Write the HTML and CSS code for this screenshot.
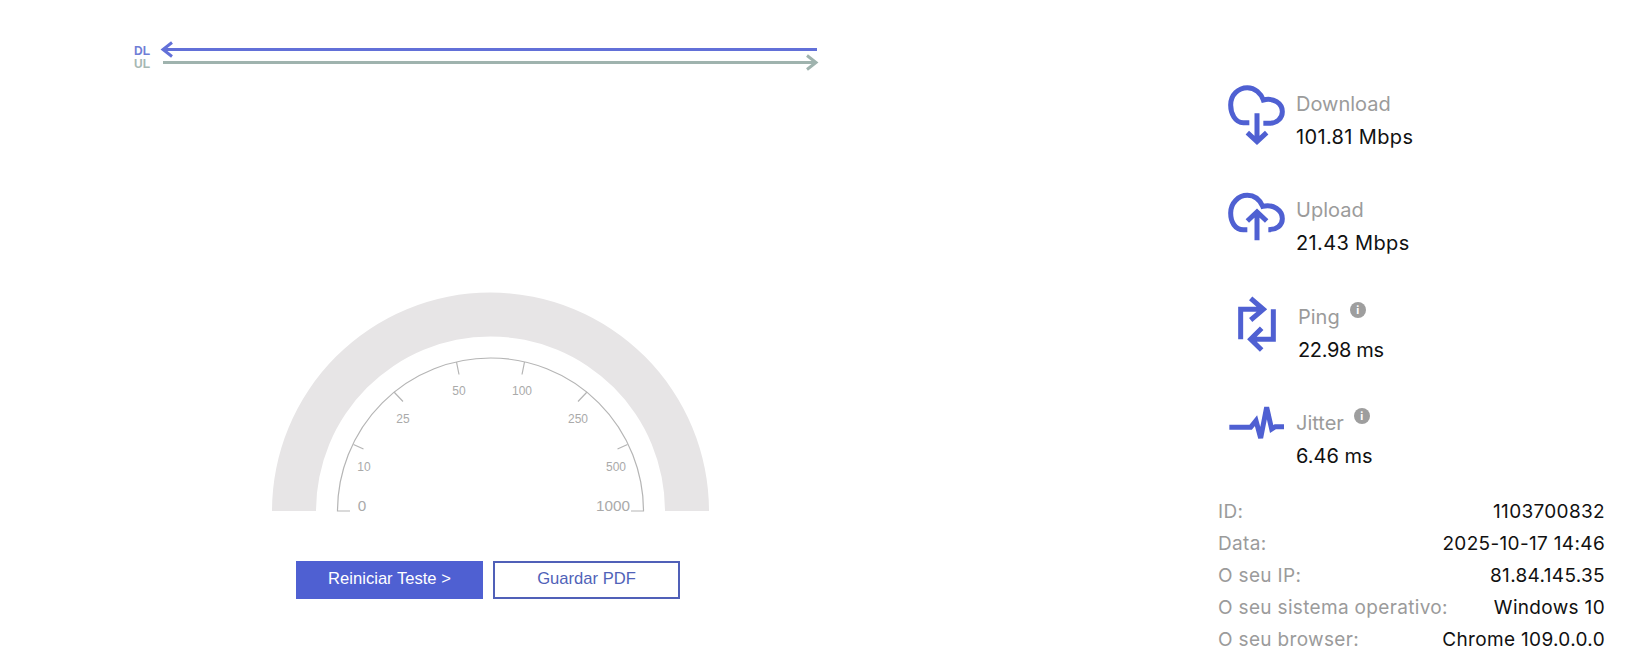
FILE: index.html
```html
<!DOCTYPE html>
<html lang="en">
<head>
  <meta charset="UTF-8">
  <title>Speed test</title>
  <link rel="stylesheet" href="styles.css">
</head>
<body>
<div class="page">
  <div class="left">
    <svg class="chart" width="840" height="80" viewBox="0 0 840 80">
      <text class="dl-label" x="134" y="55">DL</text>
      <text class="ul-label" x="134" y="68">UL</text>
      <path class="dl-line" d="M817 49.500H163M172 42.500L163 49.500L172 56.500"/>
      <path class="ul-line" d="M163 62.500H816M807 55.500L816 62.500L807 69.500"/>
    </svg>

    <svg class="gauge" width="460" height="240" viewBox="260 280 460 240">
      <path class="band" d="M272 511A218.500 218.500 0 0 1 709 511H665A174.500 174.500 0 0 0 316 511Z"/>
      <path class="scale" d="M350 511H337.500A153 153 0 0 1 643.500 511H631"/>
      <path class="scale" d="M353.500 444.500L363.500 449M394 392L403 401.500M456.500 362L459 374.500M524.500 362L522 374.500M587 392L578 401.500M627.500 444.500L617.500 449"/>
      <text class="tick" x="364" y="471">10</text>
      <text class="tick" x="403" y="423">25</text>
      <text class="tick" x="459" y="395">50</text>
      <text class="tick" x="522" y="395">100</text>
      <text class="tick" x="578" y="423">250</text>
      <text class="tick" x="616" y="471">500</text>
      <text class="end" x="362" y="511">0</text>
      <text class="end" x="630" y="511">1000</text>
    </svg>

    <div class="buttons">
      <button class="btn btn-main">Reiniciar Teste &gt;</button>
      <button class="btn btn-outline">Guardar PDF</button>
    </div>
  </div>

  <div class="right">
    <div class="metric">
      <svg class="icon" width="70" height="70" viewBox="30 21 210 210">
        <path d="M118 158H100C75 158 62 130 62 105C62 75 85 53 112 53C135 53 153 70 160 90C190 82 217 100 217 125C217 145 200 160 178 160H160"/>
        <path d="M141 130V212M112 188L141 215L170 188"/>
      </svg>
      <div class="metric-text">
        <div class="metric-name">Download</div>
        <div class="metric-value">101.81 Mbps</div>
      </div>
    </div>
    <div class="metric">
      <svg class="icon" width="70" height="70" viewBox="30 338 210 210">
        <path d="M112 478H100C75 478 62 455 62 428C62 398 85 375 112 375C135 375 150 390 158 408C190 400 217 420 217 445C217 465 200 478 175 478"/>
        <path d="M141 510V425M112 452L141 425L170 452"/>
      </svg>
      <div class="metric-text">
        <div class="metric-name">Upload</div>
        <div class="metric-value">21.43 Mbps</div>
      </div>
    </div>
    <div class="metric metric-ping">
      <svg class="icon" width="70" height="70" viewBox="30 30 210 210">
        <path d="M160 88H92V178M122 55L160 88L122 120"/>
        <path d="M190 88V178H122M155 145L122 178L155 210"/>
      </svg>
      <div class="metric-text">
        <div class="metric-name">Ping <span class="info">i</span></div>
        <div class="metric-value">22.98 ms</div>
      </div>
    </div>
    <div class="metric metric-jitter">
      <svg class="icon" width="70" height="70" viewBox="30 346 210 210">
        <path d="M58 440H122L138 420L152 472L170 380L185 445L196 438H222"/>
      </svg>
      <div class="metric-text">
        <div class="metric-name">Jitter <span class="info">i</span></div>
        <div class="metric-value">6.46 ms</div>
      </div>
    </div>

    <div class="details">
      <div class="row"><span>ID:</span><b>1103700832</b></div>
      <div class="row"><span>Data:</span><b>2025-10-17 14:46</b></div>
      <div class="row"><span>O seu IP:</span><b>81.84.145.35</b></div>
      <div class="row"><span>O seu sistema operativo:</span><b>Windows 10</b></div>
      <div class="row"><span>O seu browser:</span><b>Chrome 109.0.0.0</b></div>
    </div>
  </div>
</div>
</body>
</html>
```

FILE: styles.css
```css
body {
  margin: 0;
  background: #fff;
  font-family: Inter, "Noto Sans", sans-serif;
}
.page {
  display: flex;
  height: 664px;
  overflow: hidden;
}
.left {
  width: 1218px;
  flex-shrink: 0;
}
.chart {
  display: block;
}
.dl-label, .ul-label {
  font-family: "Liberation Sans", sans-serif;
  font-size: 12px;
  font-weight: bold;
}
.dl-label { fill: #6f7ed6; }
.ul-label { fill: #a6b8b4; }
.dl-line, .ul-line {
  fill: none;
  stroke-width: 3;
}
.dl-line { stroke: #6270d8; }
.ul-line { stroke: #9fb3ae; }
.gauge {
  display: block;
  margin: 200px 0 0 260px;
}
.band { fill: #e7e5e6; }
.scale {
  fill: none;
  stroke: #b5b5b5;
  stroke-width: 1.200;
}
.tick, .end {
  font-family: "Liberation Sans", sans-serif;
  fill: #aaa;
  text-anchor: middle;
}
.tick { font-size: 12px; }
.end { font-size: 15.300px; }
.end:last-of-type { text-anchor: end; }
.buttons {
  display: flex;
  gap: 10px;
  margin: 41px 0 0 296px;
}
.btn {
  width: 187px;
  height: 38px;
  padding: 0 0 2px;
  font-family: "Liberation Sans", sans-serif;
  font-size: 16.600px;
  cursor: pointer;
}
.btn-main {
  background: #4f60d2;
  color: #fff;
  border: 0;
}
.btn-outline {
  background: #fff;
  color: #5062b8;
  border: 2px solid #5060b8;
}
.right {
  width: 387px;
  padding-top: 77px;
}
.metric {
  display: flex;
  align-items: flex-start;
  height: 106.300px;
}
.icon {
  fill: none;
  stroke: #4f60d2;
  stroke-width: 15;
  flex-shrink: 0;
  margin: 0 6px 0 2px;
}
.metric-text {
  padding-top: 13px;
}
.metric-ping .metric-text { margin-left: 2px; }
.metric-ping .metric-value { letter-spacing: -0.350px; }
.metric-jitter .metric-value { letter-spacing: 0; }
.metric-name {
  display: flex;
  align-items: flex-start;
  gap: 10px;
  height: 33px;
  font-size: 20px;
  line-height: 28px;
  color: #9b9b9b;
}
.metric-value {
  font-size: 20px;
  letter-spacing: 0.350px;
  line-height: 28px;
  color: #111;
}
.info {
  width: 16px;
  height: 16px;
  margin-top: -1px;
  border-radius: 50%;
  background: #9e9e9e;
  color: #fff;
  font-size: 11px;
  font-weight: bold;
  line-height: 16px;
  text-align: center;
}
.details {
  margin-top: -6px;
}
.row {
  display: flex;
  justify-content: space-between;
  height: 32px;
  font-size: 19px;
  letter-spacing: 0.330px;
  line-height: 32px;
  color: #9b9b9b;
}
.row b {
  font-weight: normal;
  color: #111;
}
```
